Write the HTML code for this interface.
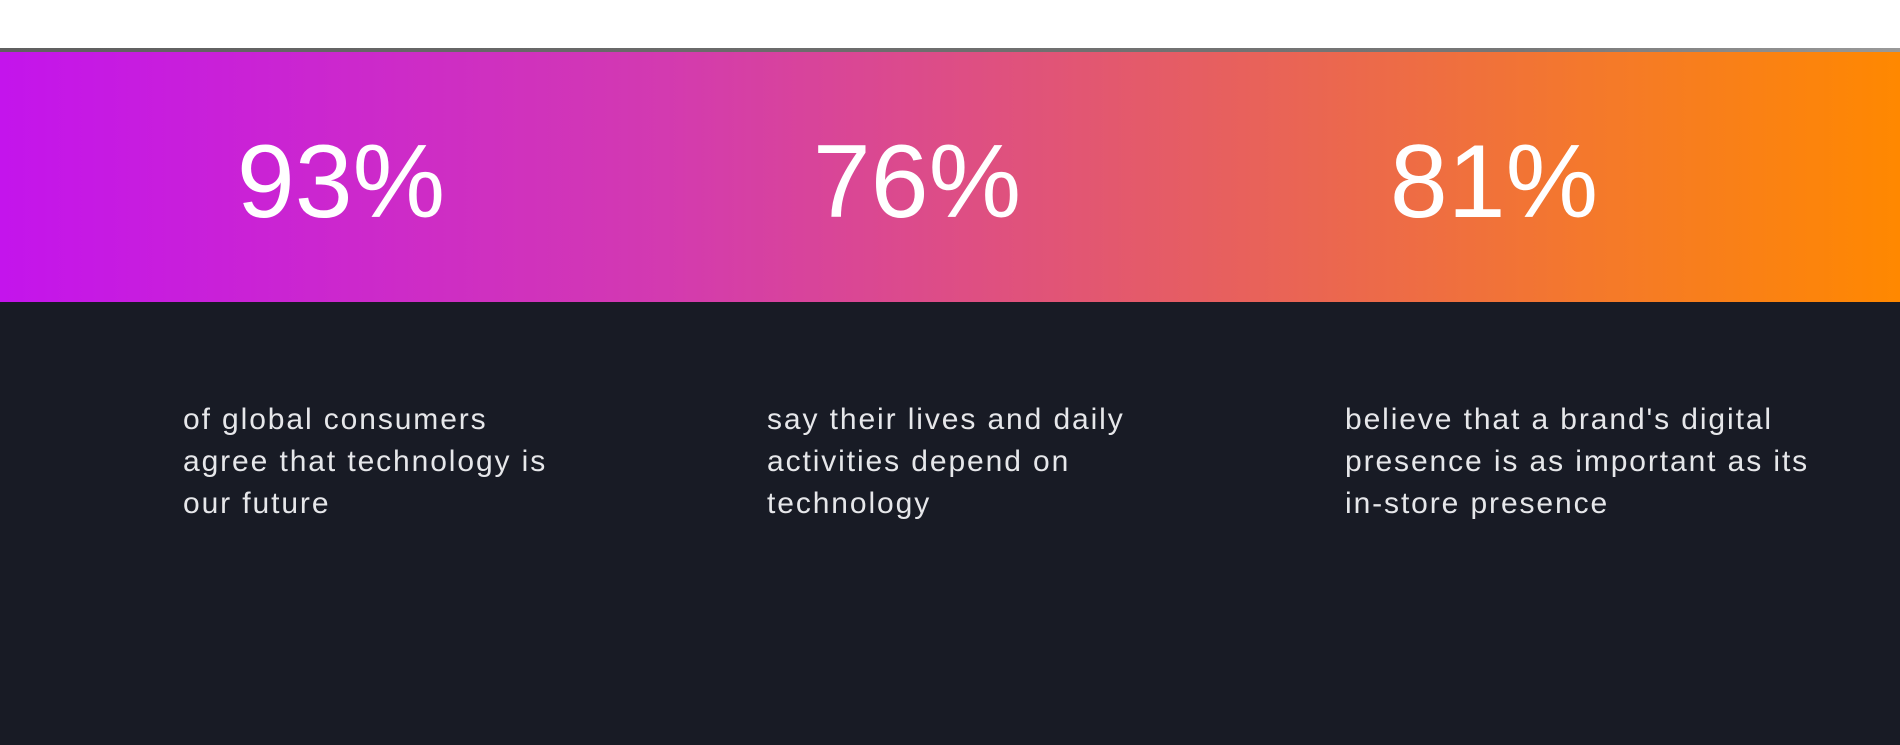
<!DOCTYPE html>
<html><head><meta charset="utf-8"><style>
html,body{margin:0;padding:0;width:1900px;height:745px;overflow:hidden;background:#181b25;font-family:"Liberation Sans",sans-serif}
.top{position:absolute;left:0;top:0;width:1900px;height:48px;background:#fff}
.line{position:absolute;left:0;top:48px;width:1900px;height:4px;background:linear-gradient(90deg,#5f5f5f,#777 80%,#999)}
.band{position:absolute;left:0;top:52px;width:1900px;height:250px;background:linear-gradient(90deg,#c414ec 0%,#d33ab0 35%,#e45a6a 60%,#f57a28 85%,#ff8800 100%)}
.num{position:absolute;top:129px;width:300px;text-align:center;color:#fff;font-size:104px;line-height:106px}
.txt{position:absolute;top:399px;color:#e6e7ea;font-size:30px;line-height:42px;white-space:nowrap;letter-spacing:1.9px}
</style></head><body>
<div class="top"></div><div class="line"></div><div class="band"></div>
<div class="num" style="left:191px">93%</div>
<div class="num" style="left:767px">76%</div>
<div class="num" style="left:1344px">81%</div>
<div class="txt" style="left:183px">of global consumers<br>agree that technology is<br>our future</div>
<div class="txt" style="left:767px">say their lives and daily<br>activities depend on<br>technology</div>
<div class="txt" style="left:1345px">believe that a brand's digital<br>presence is as important as its<br>in-store presence</div>
</body></html>
